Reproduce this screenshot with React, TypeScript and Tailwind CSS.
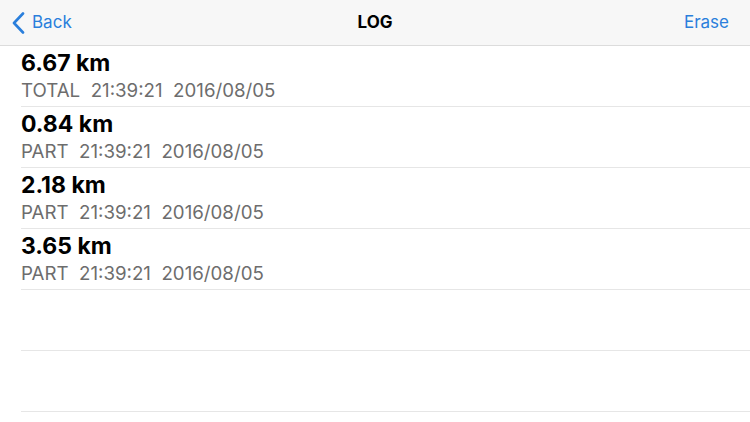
import React from 'react'

type Entry = { km: string; label: string }

const entries: Entry[] = [
  { km: '6.67 km', label: 'TOTAL' },
  { km: '0.84 km', label: 'PART' },
  { km: '2.18 km', label: 'PART' },
  { km: '3.65 km', label: 'PART' },
]

const font = { fontFamily: 'Inter, "Liberation Sans", sans-serif' }

export default function App() {
  return (
    <div className="w-[750px] h-[422px] overflow-hidden bg-white" style={font}>
      {/* nav bar */}
      <div className="h-[46px] bg-[#f7f7f7] border-b border-[#dcdcdc] flex items-center justify-between relative">
        <button className="flex items-center pl-[11px] text-[#2a7fdc] text-[17px]">
          <svg width="16" height="22" viewBox="0 0 16 22" className="mr-[5px]">
            <path d="M12 1.5 L3 11 L12 20.5" fill="none" stroke="currentColor" strokeWidth="2.6" strokeLinecap="round" strokeLinejoin="round" />
          </svg>
          Back
        </button>
        <div className="absolute left-1/2 -translate-x-1/2 text-[17px] font-bold text-black">LOG</div>
        <button className="pr-[21px] text-[#2a7fdc] text-[17px]">Erase</button>
      </div>

      {/* list */}
      <div>
        {entries.map((e, i) => (
          <div key={i} className="ml-[21px] h-[61px] border-b border-[#e6e6e6] flex flex-col pt-[4px]">
            <div className="text-[23px] leading-[27px] font-bold text-black">{e.km}</div>
            <div className="mt-[3px] text-[18.7px] leading-[22px] text-[#6d6d6d] whitespace-pre">
              {`${e.label}  21:39:21  2016/08/05`}
            </div>
          </div>
        ))}
        <div className="ml-[21px] h-[61px] border-b border-[#e6e6e6]" />
        <div className="ml-[21px] h-[61px] border-b border-[#e6e6e6]" />
      </div>
    </div>
  )
}
